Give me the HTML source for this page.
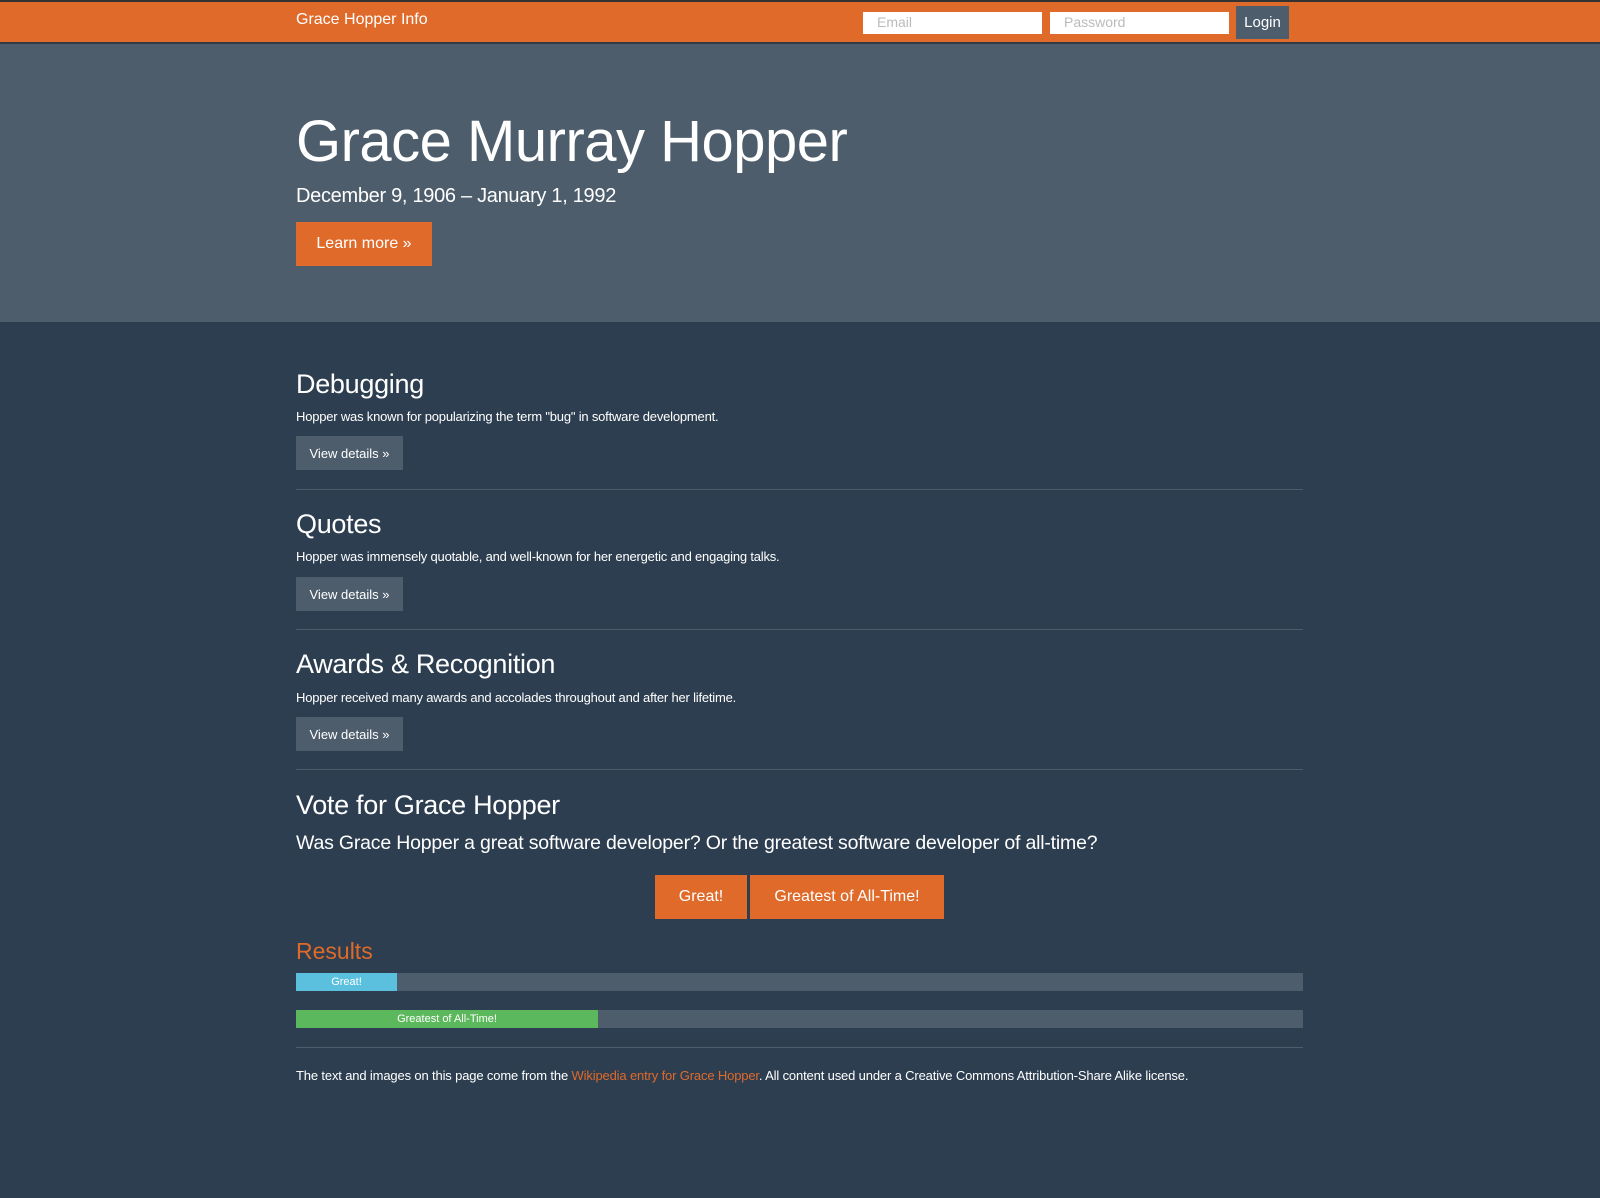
<!DOCTYPE html>
<html><head><meta charset="utf-8"><style>
*{margin:0;padding:0;box-sizing:border-box}
body{width:1600px;height:1198px;background:#2d3e50;font-family:"Liberation Sans",sans-serif;color:#fff;position:relative;overflow:hidden}
.a{position:absolute;white-space:nowrap}
.nav{position:absolute;left:0;top:0;width:1600px;height:44px;background:#df6a2a;border-top:2px solid #333;border-bottom:2px solid #333a44}
.hero{position:absolute;left:0;top:44px;width:1600px;height:278px;background:#4d5d6c}
.inp{position:absolute;top:12px;height:22px;background:#fff;color:#bbb;font-size:14px;padding:2px 14px}
.btn{position:absolute;display:flex;align-items:center;justify-content:center}
.or{background:#df6a2a;color:#fff}
.gr{background:#4d5d6c;color:#fff;font-size:13px}
.hr{position:absolute;left:296px;width:1007px;height:1px;background:#4d5d6c}
h2{position:absolute;font-weight:normal;font-size:27px;left:296px;white-space:nowrap;letter-spacing:-0.3px}
p.t{position:absolute;left:296px;font-size:13px;white-space:nowrap;letter-spacing:-0.2px}
.bar{position:absolute;left:296px;width:1007px;height:18px;background:#4d5d6c}
.bar div{height:18px;font-size:11px;display:flex;align-items:center;justify-content:center}
</style></head><body>
<div class="nav"></div>
<div class="a" style="left:296px;top:11px;font-size:16px">Grace Hopper Info</div>
<div class="inp" style="left:863px;width:179px">Email</div>
<div class="inp" style="left:1050px;width:179px">Password</div>
<div class="btn gr" style="left:1236px;top:6px;width:53px;height:33px;font-size:15px">Login</div>
<div class="hero"></div>
<div class="a" style="left:296px;top:108px;font-size:58px;letter-spacing:-0.5px">Grace Murray Hopper</div>
<div class="a" style="left:296px;top:185px;font-size:20px;letter-spacing:-0.3px">December 9, 1906 – January 1, 1992</div>
<div class="btn or" style="left:296px;top:222px;width:136px;height:44px;font-size:16px">Learn more »</div>

<h2 style="top:369px">Debugging</h2>
<p class="t" style="top:409px">Hopper was known for popularizing the term "bug" in software development.</p>
<div class="btn gr" style="left:296px;top:436px;width:107px;height:34px">View details »</div>
<div class="hr" style="top:489px"></div>

<h2 style="top:509px">Quotes</h2>
<p class="t" style="top:549px">Hopper was immensely quotable, and well-known for her energetic and engaging talks.</p>
<div class="btn gr" style="left:296px;top:577px;width:107px;height:34px">View details »</div>
<div class="hr" style="top:629px"></div>

<h2 style="top:649px">Awards &amp; Recognition</h2>
<p class="t" style="top:690px">Hopper received many awards and accolades throughout and after her lifetime.</p>
<div class="btn gr" style="left:296px;top:717px;width:107px;height:34px">View details »</div>
<div class="hr" style="top:769px"></div>

<h2 style="top:790px">Vote for Grace Hopper</h2>
<div class="a" style="left:296px;top:832px;font-size:19.5px;letter-spacing:-0.2px">Was Grace Hopper a great software developer? Or the greatest software developer of all-time?</div>
<div class="btn or" style="left:655px;top:875px;width:92px;height:44px;font-size:16px">Great!</div>
<div class="btn or" style="left:750px;top:875px;width:194px;height:44px;font-size:16px">Greatest of All-Time!</div>
<div class="a" style="left:296px;top:938px;font-size:23px;color:#df6a2a">Results</div>
<div class="bar" style="top:973px"><div style="width:101px;background:#5bc0de">Great!</div></div>
<div class="bar" style="top:1010px"><div style="width:302px;background:#5cb85c">Greatest of All-Time!</div></div>
<div class="hr" style="top:1047px"></div>
<p class="t" style="top:1068px;letter-spacing:-0.15px">The text and images on this page come from the <span style="color:#df6a2a">Wikipedia entry for Grace Hopper</span>. All content used under a Creative Commons Attribution-Share Alike license.</p>
</body></html>
